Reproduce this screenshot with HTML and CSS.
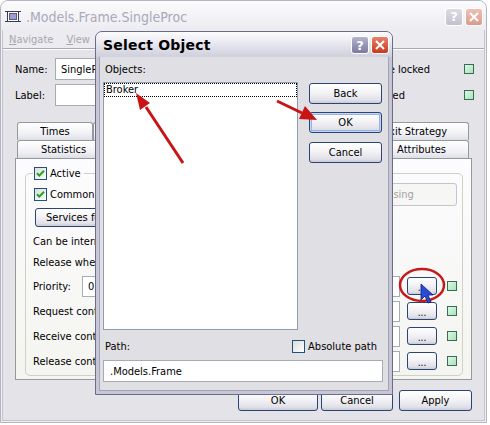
FILE: index.html
```html
<!DOCTYPE html>
<html lang="en">
<head>
    <meta charset="UTF-8">
    <meta name="viewport" content="width=device-width, initial-scale=1.0">
    <title>.Models.Frame.SingleProc</title>
    <link rel="stylesheet" href="styles.css">
</head>
<body>

<div class="window">
    <div class="titlebar">
        <svg class="app-icon" width="16" height="15" viewBox="0 0 16 15">
            <path d="M0 2.5H16M0 12.5H16" stroke="#3a3a48"/>
            <rect x="2.5" y="2.5" width="11" height="10" fill="#fff" stroke="#3a3a48"/>
            <rect x="4.5" y="4.5" width="7" height="6" fill="#9d9dd6" stroke="#5a5a80"/>
        </svg>
        <span class="title">.Models.Frame.SingleProc</span>
        <div class="caption-buttons">
            <span class="cap-btn help inactive">?</span>
            <span class="cap-btn close inactive">
                <svg width="10" height="10" viewBox="0 0 10 10"><path d="M1 1L9 9M9 1L1 9" stroke="#fff" stroke-width="2"/></svg>
            </span>
        </div>
    </div>

    <div class="frame">
        <div class="menubar">
            <span><u>N</u>avigate</span>
            <span><u>V</u>iew</span>
        </div>

        <div class="content">
            <div class="form-row">
                <span class="field-label">Name:</span>
                <div class="text-input wide">SingleProc</div>
                <span class="spacer"></span>
                <span>Entrance locked</span>
                <span class="inherit-box first"></span>
            </div>
            <div class="form-row second">
                <span class="field-label">Label:</span>
                <div class="text-input wide"></div>
                <span class="spacer"></span>
                <span>Failed</span>
                <span class="inherit-box second"></span>
            </div>

            <div class="tabs">
                <div class="tab-row">
                    <div class="tab w76">Times</div>
                    <div class="tab w90"></div>
                    <div class="tab w90"></div>
                    <div class="tab w88"></div>
                    <div class="tab w108">Exit Strategy</div>
                </div>
                <div class="tab-row">
                    <div class="tab w93">Statistics</div>
                    <div class="tab w130"></div>
                    <div class="tab w134"></div>
                    <div class="tab w95">Attributes</div>
                </div>
            </div>

            <div class="panel">
                <fieldset class="group">
                    <legend><span class="check checked"><svg width="11" height="11" viewBox="0 0 11 11"><path d="M2 5.2L4.3 7.6L9 2.8" fill="none" stroke="#21a121" stroke-width="2"/></svg></span>Active</legend>

                    <div class="row row-common">
                        <label class="check-label"><span class="check checked"><svg width="11" height="11" viewBox="0 0 11 11"><path d="M2 5.2L4.3 7.6L9 2.8" fill="none" stroke="#21a121" stroke-width="2"/></svg></span>Common resource</label>
                        <div class="xp-btn disabled processing">Processing</div>
                    </div>
                    <div class="row row-services">
                        <div class="xp-btn services">Services for...</div>
                    </div>
                    <div class="row row-text first">Can be interrupted</div>
                    <div class="row row-text">Release when finished</div>

                    <div class="row row-ctrl first">
                        <div class="priority">
                            <span class="priority-label">Priority:</span>
                            <div class="text-input small">0</div>
                        </div>
                        <div class="ctrl">
                            <div class="text-input method"></div>
                            <div class="xp-btn dots">...</div>
                            <span class="inherit-box"></span>
                        </div>
                    </div>
                    <div class="row row-ctrl">
                        <span>Request control</span>
                        <div class="ctrl">
                            <div class="text-input method"></div>
                            <div class="xp-btn dots">...</div>
                            <span class="inherit-box"></span>
                        </div>
                    </div>
                    <div class="row row-ctrl">
                        <span>Receive control</span>
                        <div class="ctrl">
                            <div class="text-input method"></div>
                            <div class="xp-btn dots">...</div>
                            <span class="inherit-box"></span>
                        </div>
                    </div>
                    <div class="row row-ctrl">
                        <span>Release control</span>
                        <div class="ctrl">
                            <div class="text-input method"></div>
                            <div class="xp-btn dots">...</div>
                            <span class="inherit-box"></span>
                        </div>
                    </div>
                </fieldset>
            </div>

            <div class="window-buttons">
                <div class="xp-btn btn-ok">OK</div>
                <div class="xp-btn btn-cancel">Cancel</div>
                <div class="xp-btn btn-apply">Apply</div>
            </div>
        </div>
    </div>
</div>

<div class="dialog">
    <div class="dialog-title">
        <span>Select Object</span>
        <div class="caption-buttons">
            <span class="cap-btn help">?</span>
            <span class="cap-btn close">
                <svg width="10" height="10" viewBox="0 0 10 10"><path d="M1 1L9 9M9 1L1 9" stroke="#fff" stroke-width="2"/></svg>
            </span>
        </div>
    </div>
    <div class="dialog-body">
        <div class="dlg-label">Objects:</div>
        <div class="dlg-main">
            <div class="listbox">
                <div class="list-item">Broker</div>
            </div>
            <div class="dlg-buttons">
                <div class="xp-btn">Back</div>
                <div class="xp-btn default">OK</div>
                <div class="xp-btn">Cancel</div>
            </div>
        </div>
        <div class="path-row">
            <span>Path:</span>
            <label class="check-label absolute"><span class="check"></span>Absolute path</label>
        </div>
        <div class="text-input path">.Models.Frame</div>
    </div>
</div>

<!-- annotations drawn over the screenshot -->
<svg class="marks" width="490" height="425" viewBox="0 0 490 425">
    <g stroke="#c81414" fill="#c81414">
        <line x1="183" y1="163" x2="146" y2="107" stroke-width="3"/>
        <polygon points="136,93 150,103 140,110" stroke="none"/>
        <line x1="277" y1="101" x2="302" y2="113" stroke-width="3"/>
        <polygon points="317,120 299,119 305,106" stroke="none"/>
    </g>
    <ellipse cx="422" cy="285" rx="22" ry="16" fill="none" stroke="#c41a1a" stroke-width="2.5"/>
    <path d="M421 284 L421 300 L425 296 L428 303 L431 302 L428 295 L433 295 Z" fill="#2a4bd7" stroke="#0b1a80" stroke-width="0.8"/>
</svg>

</body>
</html>
```

FILE: styles.css
```css
body {
    margin: 0;
    width: 490px;
    height: 425px;
    position: relative;
    overflow: hidden;
    background: #fff;
    font-family: "DejaVu Sans Condensed", "DejaVu Sans", sans-serif;
    font-size: 11px;
    color: #000;
}

/* ---------- background window (inactive) ---------- */

.window {
    width: 487px;
    height: 423px;
    box-sizing: border-box;
    border: 1px solid #b4b4c2;
    border-radius: 8px 8px 0 0;
    background: #ededf2;
    display: flex;
    flex-direction: column;
}

.titlebar {
    height: 29px;
    box-sizing: border-box;
    display: flex;
    align-items: center;
    padding: 2px 3px 0 4px;
    background: linear-gradient(#fbfbfd, #ececf1);
    border-radius: 7px 7px 0 0;
}

.app-icon {
    margin-right: 5px;
}

.title {
    flex: 1;
    font-size: 14px;
    color: #a9a9b9;
}

.caption-buttons {
    display: flex;
    gap: 2px;
}

.cap-btn {
    width: 18px;
    height: 18px;
    box-sizing: border-box;
    border: 1px solid #fff;
    border-radius: 3px;
    display: flex;
    align-items: center;
    justify-content: center;
    color: #fff;
    font-family: "DejaVu Sans", sans-serif;
    font-weight: bold;
    font-size: 13px;
}

.cap-btn.help {
    background: linear-gradient(#b4b4cc, #7a7aa2);
}

.cap-btn.close {
    background: linear-gradient(#e8826a, #c8381e);
}

.cap-btn.help.inactive {
    background: linear-gradient(#dcdce4, #c2c2ce);
}

.cap-btn.close.inactive {
    background: linear-gradient(#f0c0b4, #dc9a8c);
}

.frame {
    flex: 1;
    margin: 0 1px 1px;
    border: 1px solid #c4c4cc;
    border-top: none;
    background: #e4e4e8;
    display: flex;
    flex-direction: column;
}

.menubar {
    height: 18px;
    display: flex;
    align-items: center;
    gap: 13px;
    padding-left: 6px;
    background: #ececf0;
    color: #a6a6ae;
    border-bottom: 1px solid #a9a9b2;
}

.content {
    flex: 1;
    border-top: 1px solid #fff;
    padding: 8px 12px 0 12px;
}

.form-row {
    display: flex;
    align-items: center;
    height: 22px;
    margin-right: -2px;
}

.form-row.second {
    margin-top: 4px;
}

.field-label {
    width: 40px;
}

.spacer {
    flex: 1;
}

.text-input {
    height: 22px;
    box-sizing: border-box;
    border: 1px solid #a5acb5;
    background: #fff;
    padding: 0 5px;
    display: flex;
    align-items: center;
}

.text-input.wide {
    width: 250px;
}

.inherit-box {
    width: 10px;
    height: 10px;
    box-sizing: border-box;
    border: 1px solid #3c6a58;
    background: linear-gradient(135deg, #dcf8e4, #a6e4b8);
}

.inherit-box.first {
    margin-left: 34px;
}

.inherit-box.second {
    margin-left: 59px;
}

/* ---------- tabs ---------- */

.tabs {
    margin: 16px 3px 0 2px;
}

.tab-row {
    display: flex;
    height: 18px;
}

.tab {
    box-sizing: border-box;
    border: 1px solid #919b9c;
    border-bottom: none;
    border-radius: 3px 3px 0 0;
    background: linear-gradient(#ffffff, #f2f2f6 60%, #dedee8);
    display: flex;
    align-items: center;
    justify-content: center;
}

.w76 { width: 76px; }
.w88 { width: 88px; }
.w90 { width: 90px; }
.w93 { width: 93px; }
.w95 { width: 95px; }
.w108 { width: 108px; }
.w130 { width: 130px; }
.w134 { width: 134px; }

.panel {
    height: 222px;
    box-sizing: border-box;
    border: 1px solid #919b9c;
    background: linear-gradient(#fcfcfe, #f4f4f0);
    padding: 8px 8px 0 9px;
}

.group {
    margin: 0;
    height: 209px;
    box-sizing: border-box;
    border: 1px solid #d0d0c4;
    border-radius: 5px;
    padding: 0 5px 0 7px;
}

.group legend {
    padding: 0 3px 0 1px;
    display: flex;
    align-items: center;
    gap: 3px;
    height: 13px;
}

.check {
    width: 13px;
    height: 13px;
    box-sizing: border-box;
    border: 1px solid #1c5180;
    background: linear-gradient(135deg, #dcdcd7, #ffffff);
    display: inline-flex;
    align-items: center;
    justify-content: center;
    flex: none;
}

.check-label {
    display: flex;
    align-items: center;
    gap: 3px;
}

.row {
    display: flex;
    align-items: center;
    justify-content: space-between;
}

.row-common {
    height: 24px;
    margin-top: 2px;
    padding-left: 1px;
}

.row-services {
    height: 19px;
    margin-top: 2px;
    padding-left: 2px;
}

.row-text {
    height: 20px;
    margin-top: 1px;
}

.row-text.first {
    margin-top: 4px;
}

.row-ctrl {
    height: 24px;
    margin-top: 1px;
}

.row-ctrl.first {
    margin-top: 2px;
}

.priority {
    display: flex;
    align-items: center;
}

.priority-label {
    width: 49px;
}

.text-input.small {
    width: 60px;
    height: 21px;
}

.ctrl {
    display: flex;
    align-items: center;
}

.text-input.method {
    width: 150px;
    height: 21px;
}

/* ---------- XP buttons ---------- */

.xp-btn {
    height: 21px;
    box-sizing: border-box;
    border: 1px solid #2b4474;
    border-radius: 3px;
    background: linear-gradient(#ffffff, #f3f3f6 45%, #e0e0e8 85%, #c9c9d6);
    display: flex;
    align-items: center;
    justify-content: center;
}

.xp-btn.default {
    box-shadow: inset 0 0 0 1px #c4d6f6, inset 0 0 0 2px #98b2e4;
}

.xp-btn.disabled {
    border-color: #c4c4cc;
    background: #f6f6f4;
    color: #a2a2a2;
}

.xp-btn.processing {
    width: 139px;
    height: 23px;
}

.xp-btn.services {
    width: 130px;
    height: 19px;
    justify-content: flex-start;
    padding-left: 10px;
}

.xp-btn.dots {
    width: 30px;
    height: 18px;
    margin-left: 7px;
    margin-right: 10px;
    font-size: 10px;
    padding-top: 2px;
}

.window-buttons {
    display: flex;
    justify-content: flex-end;
    margin-top: 10px;
}

.btn-ok {
    width: 80px;
    margin-right: 3px;
}

.btn-cancel {
    width: 72px;
    margin-right: 6px;
}

.btn-apply {
    width: 73px;
}

/* ---------- Select Object dialog ---------- */

.dialog {
    position: absolute;
    left: 95px;
    top: 31px;
    width: 298px;
    height: 364px;
    box-sizing: border-box;
    border: 1px solid #6c6c86;
    border-radius: 7px 7px 0 0;
    background: #c6c6d6;
    display: flex;
    flex-direction: column;
    z-index: 1;
}

.dialog-title {
    height: 25px;
    box-sizing: border-box;
    display: flex;
    align-items: center;
    justify-content: space-between;
    padding: 1px 3px 0 7px;
    background: linear-gradient(#fdfdfe, #e8e8f0 45%, #cfcfdc);
    border-radius: 6px 6px 0 0;
    font-family: "DejaVu Sans", sans-serif;
    font-weight: bold;
    font-size: 14px;
    letter-spacing: 0.2px;
}

.dialog-body {
    flex: 1;
    margin: 0 3px 3px;
    border: 1px solid #a3a3b6;
    border-top: none;
    background: #e0dfe3;
    padding: 6px 6px 0 3px;
}

.dlg-label {
    height: 13px;
    line-height: 13px;
    margin-bottom: 6px;
    padding-left: 2px;
}

.dlg-main {
    display: flex;
    gap: 11px;
}

.listbox {
    width: 195px;
    height: 248px;
    box-sizing: border-box;
    border: 1px solid #8c9cb4;
    background: #fff;
}

.list-item {
    height: 14px;
    box-sizing: border-box;
    border: 1px dotted #000;
    padding-left: 1px;
    line-height: 12px;
}

.dlg-buttons {
    flex: 1;
    display: flex;
    flex-direction: column;
    gap: 8px;
    margin-top: 1px;
}

.dlg-buttons .xp-btn:last-child {
    margin-top: 1px;
}

.path-row {
    height: 20px;
    margin-top: 6px;
    display: flex;
    align-items: center;
    justify-content: space-between;
    padding-left: 2px;
}

.check-label.absolute {
    margin-right: 5px;
}

.text-input.path {
    width: 280px;
    margin-top: 4px;
    padding-left: 6px;
}

.marks {
    position: absolute;
    left: 0;
    top: 0;
    z-index: 2;
    pointer-events: none;
}
```
